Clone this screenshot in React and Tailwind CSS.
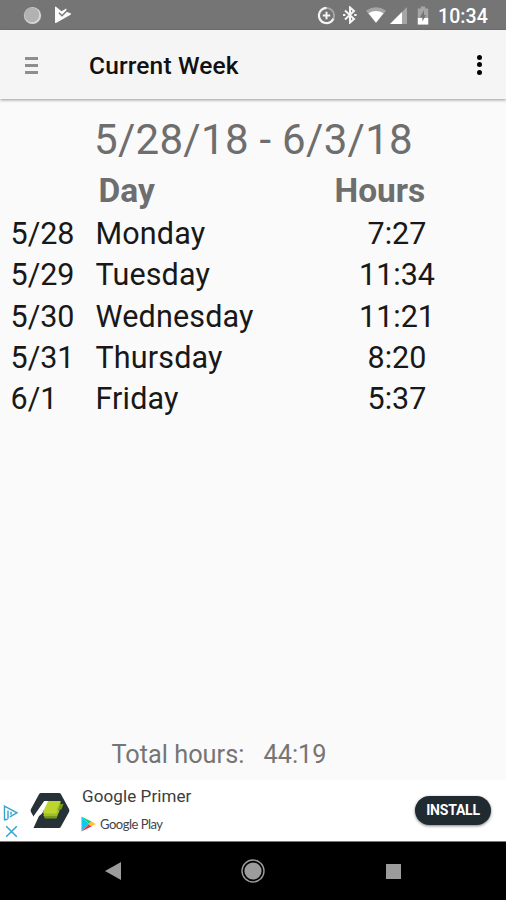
const rows = [
  { date: "5/28", day: "Monday", hours: "7:27" },
  { date: "5/29", day: "Tuesday", hours: "11:34" },
  { date: "5/30", day: "Wednesday", hours: "11:21" },
  { date: "5/31", day: "Thursday", hours: "8:20" },
  { date: "6/1", day: "Friday", hours: "5:37" },
];

function StatusBar() {
  return (
    <div className="flex h-[30px] shrink-0 items-center bg-[#757575] text-white">
      <svg className="ml-[23px] size-[19px]" viewBox="0 0 19 19">
        <circle cx="9.5" cy="9.5" r="8.6" fill="#d6d6d6" />
        <circle cx="8.8" cy="8.8" r="7.4" fill="#b2b2b2" />
      </svg>
      <svg className="ml-[12px] h-[18px] w-[18px]" viewBox="0 0 18 18">
        <path d="M1 1.2 Q1 .3 2 .8 L7.5 5.2 L12.2 2.4 L13 6 L16.6 7.2 Q17.6 8 16.6 8.7 L2 17 Q1 17.4 1 16.4Z" fill="#fafafa" />
        <path d="M5 6.8 L8 9.8 L14.4 3.2" stroke="#757575" strokeWidth="1.4" fill="none" />
      </svg>
      <svg className="ml-[245px] size-[19px]" viewBox="0 0 19 19" fill="none">
        <circle cx="9.5" cy="9.5" r="7.6" stroke="#a5a5a5" strokeWidth="2" />
        <path d="M9.5 1.9 A7.6 7.6 0 1 0 16.4 12.7" stroke="#f5f5f5" strokeWidth="2.2" />
        <path d="M9.5 5.8V13.2M5.8 9.5H13.2" stroke="#f5f5f5" strokeWidth="2" />
      </svg>
      <svg className="ml-[7px] h-[18px] w-[14px]" viewBox="0 0 14 18" fill="none">
        <path d="M2 4.6 L11 13 L7 16.6 V1.4 L11 5 L2 13.4" stroke="#f5f5f5" strokeWidth="2" />
        <path d="M0 9H2.4M11.2 9H13.6" stroke="#f5f5f5" strokeWidth="2" />
      </svg>
      <svg className="ml-[9px] h-[18px] w-[20px]" viewBox="0 0 22 18">
        <path d="M0 4.2 Q11 -3 22 4.2 L11 17.6Z" fill="#a5a5a5" />
        <path d="M2.7 7.2 Q11 2 19.3 7.2 L11 17.6Z" fill="#fff" />
      </svg>
      <svg className="ml-[4px] h-[17px] w-[17px]" viewBox="0 0 17 17">
        <path d="M17 0V17H0Z" fill="#a5a5a5" />
        <path d="M12 5V17H0Z" fill="#fff" />
      </svg>
      <svg className="ml-[10px] h-[19px] w-[12px]" viewBox="0 0 12 19">
        <path d="M3.8 0.5H8.2V2.4H11.2V18.5H.8V2.4H3.8Z" fill="#a5a5a5" />
        <path d="M.8 12H11.2V18.5H.8Z" fill="#fff" />
        <path d="M7 4 L3 11.4H5.4V15.5L9 9H7Z" fill="#757575" />
      </svg>
      <span className="ml-[9px] mt-[3px] text-[19.5px] font-medium leading-[24px] tracking-[0.1px]">10:34</span>
    </div>
  );
}

function AppBar() {
  return (
    <header className="relative z-10 flex h-[69px] shrink-0 items-center bg-[#f5f5f5] shadow-[0_1px_3px_rgba(0,0,0,0.4)]">
      <div className="ml-[25px] mt-[2px] flex w-[13px] flex-col gap-[4px]">
        <div className="h-[3px] bg-[#8e8e8e]" />
        <div className="h-[3px] bg-[#8e8e8e]" />
        <div className="h-[3px] bg-[#8e8e8e]" />
      </div>
      <h1 className="ml-[51px] mt-[3px] text-[24.5px] font-medium leading-[30px] tracking-[0.15px] text-[#111]">Current Week</h1>
      <div className="ml-auto mr-[24px] flex flex-col gap-[2.5px]">
        <div className="size-[5px] rounded-full bg-black" />
        <div className="size-[5px] rounded-full bg-black" />
        <div className="size-[5px] rounded-full bg-black" />
      </div>
    </header>
  );
}

function WeekTable() {
  return (
    <main className="flex h-[681px] shrink-0 flex-col bg-[#fafafa]">
      <h2 className="mt-[11px] pl-[94px] text-[42px] leading-[59px] tracking-[0.3px] text-[#6e6e6e]">5/28/18 - 6/3/18</h2>
      <div className="flex h-[44px] pl-[98.5px] text-[33.5px] font-bold leading-[44px] text-[#6e6e6e]">
        <span className="w-[236px]">Day</span>
        <span>Hours</span>
      </div>
      {rows.map((r) => (
        <div key={r.date} className="flex h-[41.3px] shrink-0 items-center pl-[10.5px] text-[30.5px] leading-[41px] text-[#181818]">
          <span className="w-[85px]">{r.date}</span>
          <span className="w-[257px] tracking-[0.15px]">{r.day}</span>
          <span className="w-[89px] text-center">{r.hours}</span>
        </div>
      ))}
      <p className="mt-auto mb-[8px] flex pl-[111.5px] text-[25.3px] leading-[34px] text-[#757575]">
        <span className="w-[152px]">Total hours:</span>
        <span>44:19</span>
      </p>
    </main>
  );
}

function AdBanner() {
  return (
    <section className="flex h-[62px] shrink-0 items-center border-b border-[#777] bg-white">
      <div className="ml-[3px] mt-[21px] flex w-[16px] flex-col items-center gap-[4px]">
        <svg className="h-[16px] w-[16px]" viewBox="0 0 16 16" fill="none" stroke="#35a3cc" strokeWidth="1.4">
          <path d="M4.6 14.2 1.5 14.8V1.2L14 7.8 6.8 11.8 M5 13.8V5.4" />
          <path d="M8 6.8V9.8" />
        </svg>
        <svg className="h-[13px] w-[13px]" viewBox="0 0 13 13" fill="none" stroke="#35a3cc" strokeWidth="1.5">
          <path d="M1.2 1.2 11.8 11.8M11.8 1.2 1.2 11.8" />
        </svg>
      </div>
      <svg className="ml-[11px] h-[37px] w-[40px]" viewBox="0 0 40 37">
        <path d="M11 1H29Q30.2 1 31 2.2L39 17Q39.8 18.5 39 20L31 34.5Q30.2 36 29 36H11Q9.8 36 9 34.8L1 20Q.2 18.5 1 17L9 2.2Q9.8 1 11 1Z" fill="#263238" />
        <path d="M28 12H33.5L31.5 17.5H30L26.5 26.5H15L13 23Z" fill="#769a1c" />
        <path d="M26 9.5H31L28 18.5H29.5L27 24H14L14 18Z" fill="#9cbf28" />
        <path d="M15.5 9H30.5L26.5 18H28L26 21.5 13 21.5Z" fill="#bdd52f" />
        <path d="M14.2 9H18.2L12.6 20.5 9.8 25.2 4 36V37H0V24.5L3 25Z" fill="#fff" />
        <path d="M9 24 13 21 11.5 27H14L10 36H3.5Z" fill="#263238" />
      </svg>
      <div className="-mt-[4px] ml-[12px] flex flex-col">
        <span className="text-[17px] leading-[22px] tracking-[0.1px] text-[#3c3c3c]">Google Primer</span>
        <div className="mt-[8px] flex h-[18px] items-center">
          <svg className="-ml-[1px] h-[16px] w-[15px]" viewBox="0 0 15 16">
            <path d="M.5 .5V15.5L8 8Z" fill="#15c5ee" />
            <path d="M.5 .5 10.5 5.5 8 8Z" fill="#12d47b" />
            <path d="M.5 15.5 10.5 10.5 8 8Z" fill="#ee3546" />
            <path d="M10.5 5.5 14.8 8 10.5 10.5 8 8Z" fill="#ffc51c" />
          </svg>
          <span className="ml-[4px] font-['Lato'] text-[13px] leading-[18px] tracking-[-0.5px] text-[#444]">Google Play</span>
        </div>
      </div>
      <button className="ml-auto mr-[15px] flex h-[29px] w-[76px] items-center justify-center rounded-full bg-[#202a31] text-[14px] font-bold tracking-[-0.2px] text-white shadow-[0_1px_3px_rgba(0,0,0,0.5)]">INSTALL</button>
    </section>
  );
}

function NavBar() {
  return (
    <nav className="flex h-[58px] shrink-0 items-center bg-black">
      <svg className="ml-[105px] h-[18px] w-[16px]" viewBox="0 0 16 18">
        <path d="M16 0V18L0 9Z" fill="#9c9c9c" />
      </svg>
      <svg className="ml-[120px] size-[24px]" viewBox="0 0 24 24">
        <circle cx="12" cy="12" r="11" fill="none" stroke="#9c9c9c" strokeWidth="1.4" />
        <circle cx="12" cy="12" r="8.6" fill="#9c9c9c" />
      </svg>
      <div className="ml-[121px] size-[15px] bg-[#9c9c9c]" />
    </nav>
  );
}

export default function App() {
  return (
    <div className="flex h-[900px] w-[506px] flex-col overflow-hidden bg-black font-['Roboto',sans-serif]">
      <StatusBar />
      <AppBar />
      <WeekTable />
      <AdBanner />
      <NavBar />
    </div>
  );
}
